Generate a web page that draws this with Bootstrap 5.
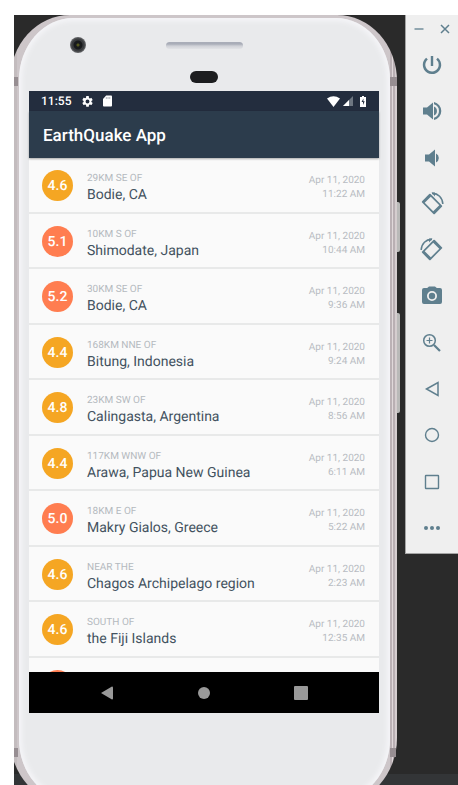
<!DOCTYPE html>
<html lang="en">
<head>
<meta charset="utf-8">
<meta name="viewport" content="width=device-width, initial-scale=1">
<title>EarthQuake App</title>
<link href="https://cdn.jsdelivr.net/npm/bootstrap@5.3.0/dist/css/bootstrap.min.css" rel="stylesheet">
<style>
  body { font-family: Roboto, "Noto Sans", sans-serif; background: #fff; text-rendering: geometricPrecision; }
  .stage { margin: 15px 0 0 14px; height: calc(100vh - 15px);
    background: linear-gradient(to top, #333537 11px, #2a2a2a 11px); }
  .handset { margin-left: -4px; margin-right: 8px; border-radius: 60px / 66px; min-width: 0;
    background: linear-gradient(to right, #c3bcbe 0 7px, #cdc6c9 7px calc(100% - 7px), #bbb1b5 calc(100% - 7px) calc(100% - 5px), #e0d8da calc(100% - 5px) calc(100% - 4px), #b9afb3 calc(100% - 4px) calc(100% - 2px), #d5cdcf calc(100% - 2px));
    padding: 3px 7px 3px 9px; }
  .face { background: #e9eaec; border-radius: 54px / 62px; padding: 73px 11px 88px 10px;
    box-shadow: inset 0 0 5px 3px #f5f5f8; }
  .seam { top: 62px; width: 7px; height: 9px; background: #978e92; }
  .seam-left { left: 4px; width: 4px; }
  .seam-right { right: 0; }
  .seam-low-left { left: 4px; width: 4px; top: 733px; }
  .seam-low-right { right: 1px; width: 6px; top: 733px; }
  .side-key { left: 100%; width: 3px; background: #b9b9b8; border-radius: 0 2px 2px 0; }
  .key-power { top: 187px; height: 50px; }
  .key-volume { top: 298px; height: 100px; }
  .lens { left: 60px; top: 22px; width: 16px; height: 16px; border-radius: 50%;
    background: radial-gradient(circle, #55581f 0 1px, #181a1c 2px 4px, #3a3c3e 5px 6px, #6c6d70 8px); }
  .speaker { left: 156px; top: 27px; width: 77px; height: 7px; border-radius: 4px;
    background: linear-gradient(#a9adb8 0 2px, #cfd1d7 4px, #e2e3e6); }
  .sensor { left: 180px; top: 56px; width: 28px; height: 12px; border-radius: 6px; background: #1c1d1f; }
  .statusbar { height: 20px; background: #232d3e; color: #fff; padding: 0 13px 0 12px; font-size: 12px; line-height: 20px; font-weight: 500; }
  .status-icons { margin-left: 10px; gap: 9px; }
  .signal-icons { gap: 3px; }
  .appbar { height: 47px; background: #2c3c4c; color: #fff; padding: 2px 14px 0; box-shadow: 0 1px 2px #0005; }
  .appbar h1 { font-size: 17px; line-height: 20px; font-weight: 500; }
  .quake-view { height: 514px; background: #fafafa; }
  .quake-list { height: 555px; display: grid; grid-auto-rows: 1fr; }
  .quake { border-bottom: 2px solid #e8e9e9; padding: 2px 14px 0 13px; }
  .magnitude { width: 31px; height: 31px; margin-right: 14px; padding-top: 2px; font-size: 14px; font-weight: 500; color: #fff; background: #f5a623; }
  .strong { background: #ff7d50; }
  .quake > div { padding-top: 5px; }
  .offset-text { font-size: 10px; line-height: 14px; color: #b4b9be; }
  .place-text { font-size: 14px; line-height: 18px; color: #435260; }
  .when-text { font-size: 10px; line-height: 14px; color: #b8bcc2; }
  .softkeys { height: 41px; background: #000; gap: 83px; }
  .softkeys button, .tools button { border: 0; background: none; padding: 0; }
  .tools { width: 53px; min-height: 539px; padding-bottom: 2px; background: #efefef; border-left: 1px solid #a4a4a4; border-bottom: 1px solid #a4a4a4; color: #5f7f8e; }
  .tools button { color: inherit; }
  .tools .window-keys button { height: 27px; width: 26px; }
  svg { display: block; }
</style>
<script src="https://cdn.jsdelivr.net/npm/bootstrap@5.3.0/dist/js/bootstrap.bundle.min.js"></script>
</head>
<body>
<div class="stage d-flex align-items-start overflow-hidden">
  <main class="handset position-relative flex-grow-1">
    <i class="seam seam-left position-absolute"></i><i class="seam seam-right position-absolute"></i>
    <i class="seam seam-low-left position-absolute"></i><i class="seam seam-low-right position-absolute"></i>
    <i class="side-key key-power position-absolute"></i><i class="side-key key-volume position-absolute"></i>
    <div class="face">
      <i class="lens position-absolute"></i><i class="speaker position-absolute"></i><i class="sensor position-absolute"></i>
      <div class="statusbar d-flex align-items-center">
        <span>11:55</span>
        <div class="status-icons d-flex align-items-center">
          <svg width="13" height="13" viewBox="0 0 24 24" fill="#fff" aria-hidden="true"><path d="M19.14 12.94c.04-.3.06-.61.06-.94s-.02-.64-.07-.94l2.03-1.58a.49.49 0 0 0 .12-.61l-1.92-3.32a.49.49 0 0 0-.59-.22l-2.39.96a7 7 0 0 0-1.62-.94l-.36-2.54A.48.48 0 0 0 13.92 2h-3.84a.48.48 0 0 0-.48.41l-.36 2.54c-.59.24-1.13.57-1.62.94l-2.39-.96a.48.48 0 0 0-.59.22L2.74 8.87a.48.48 0 0 0 .12.61l2.03 1.58a7.300 7.300 0 0 0 0 1.880l-2.03 1.580a.49.49 0 0 0-.12.61l1.920 3.320c.12.22.37.29.59.22l2.390-.96c.5.38 1.030.7 1.620.94l.36 2.540c.05.24.24.41.48.41h3.840c.24 0 .44-.17.47-.41l.36-2.540a7 7 0 0 0 1.620-.94l2.390.96c.22.08.47 0 .59-.22l1.920-3.320a.48.48 0 0 0-.12-.61zM12 15.600a3.600 3.600 0 1 1 0-7.200 3.600 3.600 0 0 1 0 7.200z"/></svg>
          <svg width="9" height="12" viewBox="0 0 10 12" preserveAspectRatio="none" aria-hidden="true"><path d="M3.500 .5H9a1 1 0 0 1 1 1v9a1 1 0 0 1-1 1H1a1 1 0 0 1-1-1V4z" fill="#fff"/><path d="M3.700 2v2M5.600 2v2M7.500 2v2" stroke="#8b929c" stroke-width=".7"/></svg>
        </div>
        <div class="signal-icons ms-auto d-flex align-items-center">
          <svg width="13" height="11" viewBox="0 0 13 11" aria-hidden="true"><path d="M0 2.500Q6.500-2 13 2.500L6.500 11z" fill="#fff"/></svg>
          <svg width="10" height="10" viewBox="0 0 10 10" aria-hidden="true"><path d="M0 10 10 0v10z" fill="#6d7681"/><path d="M0 10 6 4v6z" fill="#fff"/></svg>
          <svg class="ms-1" width="6" height="11" viewBox="0 0 6 11" aria-hidden="true"><path d="M2 0h2v1h2v10H0V1h2z" fill="#fff"/><path d="M3.500 2.500 1.500 6H3v3l1.700-3.700H3.300z" fill="#232d3e"/></svg>
        </div>
      </div>
      <header class="appbar d-flex align-items-center position-relative"><h1 class="m-0">EarthQuake App</h1></header>
      <div class="quake-view overflow-hidden">
        <ul class="quake-list list-unstyled m-0">
          <li class="quake d-flex align-items-center"><span class="magnitude rounded-circle d-flex align-items-center justify-content-center">4.6</span><div class="flex-grow-1"><div class="offset-text">29KM SE OF</div><div class="place-text">Bodie, CA</div></div><div class="when-text text-end">Apr 11, 2020<br>11:22 AM</div></li>
          <li class="quake d-flex align-items-center"><span class="magnitude strong rounded-circle d-flex align-items-center justify-content-center">5.1</span><div class="flex-grow-1"><div class="offset-text">10KM S OF</div><div class="place-text">Shimodate, Japan</div></div><div class="when-text text-end">Apr 11, 2020<br>10:44 AM</div></li>
          <li class="quake d-flex align-items-center"><span class="magnitude strong rounded-circle d-flex align-items-center justify-content-center">5.2</span><div class="flex-grow-1"><div class="offset-text">30KM SE OF</div><div class="place-text">Bodie, CA</div></div><div class="when-text text-end">Apr 11, 2020<br>9:36 AM</div></li>
          <li class="quake d-flex align-items-center"><span class="magnitude rounded-circle d-flex align-items-center justify-content-center">4.4</span><div class="flex-grow-1"><div class="offset-text">168KM NNE OF</div><div class="place-text">Bitung, Indonesia</div></div><div class="when-text text-end">Apr 11, 2020<br>9:24 AM</div></li>
          <li class="quake d-flex align-items-center"><span class="magnitude rounded-circle d-flex align-items-center justify-content-center">4.8</span><div class="flex-grow-1"><div class="offset-text">23KM SW OF</div><div class="place-text">Calingasta, Argentina</div></div><div class="when-text text-end">Apr 11, 2020<br>8:56 AM</div></li>
          <li class="quake d-flex align-items-center"><span class="magnitude rounded-circle d-flex align-items-center justify-content-center">4.4</span><div class="flex-grow-1"><div class="offset-text">117KM WNW OF</div><div class="place-text">Arawa, Papua New Guinea</div></div><div class="when-text text-end">Apr 11, 2020<br>6:11 AM</div></li>
          <li class="quake d-flex align-items-center"><span class="magnitude strong rounded-circle d-flex align-items-center justify-content-center">5.0</span><div class="flex-grow-1"><div class="offset-text">18KM E OF</div><div class="place-text">Makry Gialos, Greece</div></div><div class="when-text text-end">Apr 11, 2020<br>5:22 AM</div></li>
          <li class="quake d-flex align-items-center"><span class="magnitude rounded-circle d-flex align-items-center justify-content-center">4.6</span><div class="flex-grow-1"><div class="offset-text">NEAR THE</div><div class="place-text">Chagos Archipelago region</div></div><div class="when-text text-end">Apr 11, 2020<br>2:23 AM</div></li>
          <li class="quake d-flex align-items-center"><span class="magnitude rounded-circle d-flex align-items-center justify-content-center">4.6</span><div class="flex-grow-1"><div class="offset-text">SOUTH OF</div><div class="place-text">the Fiji Islands</div></div><div class="when-text text-end">Apr 11, 2020<br>12:35 AM</div></li>
          <li class="quake d-flex align-items-center"><span class="magnitude strong rounded-circle"></span></li>
        </ul>
      </div>
      <nav class="softkeys d-flex align-items-center justify-content-center" aria-label="System">
        <button type="button" aria-label="Back"><svg width="14" height="14" viewBox="0 0 14 14" fill="#999"><path d="M1 7 12 .5q1 0 1 1v11q0 1-1 1z"/></svg></button>
        <button type="button" aria-label="Home"><svg width="14" height="14" viewBox="0 0 14 14" fill="#999"><circle cx="7" cy="7" r="6"/></svg></button>
        <button type="button" aria-label="Overview"><svg width="14" height="14" viewBox="0 0 14 14" fill="#999"><rect width="14" height="14" rx="1"/></svg></button>
      </nav>
    </div>
  </main>
  <aside class="tools d-flex flex-column flex-shrink-0" aria-label="Emulator controls">
    <div class="window-keys d-flex">
      <button type="button" aria-label="Minimize" class="d-flex align-items-center justify-content-center"><svg width="10" height="10" viewBox="0 0 10 10" stroke="currentColor" stroke-width="1.300"><path d="M.5 5h9"/></svg></button>
      <button type="button" aria-label="Close" class="d-flex align-items-center justify-content-center"><svg width="10" height="10" viewBox="0 0 10 10" stroke="currentColor" stroke-width="1.500"><path d="M1 1l8 8M9 1 1 9"/></svg></button>
    </div>
    <button type="button" aria-label="Power" class="flex-fill d-flex align-items-center justify-content-center"><svg width="24" height="24" viewBox="0 0 24 24" fill="currentColor"><path d="M13.200 3h-2.400v10h2.400zm4.630 1.800-1.600 1.700A6.700 6.700 0 0 1 18.700 12a6.700 6.700 0 1 1-10.900-5.500L6.170 4.800A9.200 9.200 0 0 0 2.800 12a9.200 9.200 0 1 0 15.030-7.200z"/></svg></button>
    <button type="button" aria-label="Volume up" class="flex-fill d-flex align-items-center justify-content-center"><svg width="24" height="24" viewBox="0 0 24 24" fill="currentColor"><path d="M3 8.500v7h4l6 5V3.500l-6 5zM14 7.500v9a4.900 4.900 0 0 0 0-9zM14 3v2.300a7 7 0 0 1 0 13.400V21a9.200 9.200 0 0 0 0-18z"/></svg></button>
    <button type="button" aria-label="Volume down" class="flex-fill d-flex align-items-center justify-content-center"><svg width="24" height="24" viewBox="0 0 24 24" fill="currentColor"><path d="M5 8.500v7h4l6 5V3.500l-6 5zM16 7.500v9a5 5 0 0 0 0-9z"/></svg></button>
    <button type="button" aria-label="Rotate left" class="flex-fill d-flex align-items-center justify-content-center"><svg width="24" height="24" viewBox="0 0 24 24" fill="currentColor"><path transform="rotate(-45 12 12)" fill-rule="evenodd" d="M7 3h10q1 0 1 1v16q0 1-1 1H7q-1 0-1-1V4q0-1 1-1zM7.700 6v12h8.600V6z"/><path d="M12 1.400C18 1 22.600 6 22.800 12" fill="none" stroke="currentColor" stroke-width="1.500"/><path d="M11.500 .6h3.500v4z"/></svg></button>
    <button type="button" aria-label="Rotate right" class="flex-fill d-flex align-items-center justify-content-center"><svg width="24" height="24" viewBox="0 0 24 24" fill="currentColor"><path transform="rotate(45 12 12)" fill-rule="evenodd" d="M7 3h10q1 0 1 1v16q0 1-1 1H7q-1 0-1-1V4q0-1 1-1zM7.700 6v12h8.600V6z"/><path d="M12 1.400C6 1 1.400 6 1.200 12" fill="none" stroke="currentColor" stroke-width="1.500"/><path d="M12.500 .6H9v4z"/></svg></button>
    <button type="button" aria-label="Take screenshot" class="flex-fill d-flex align-items-center justify-content-center"><svg width="24" height="24" viewBox="0 0 24 24" fill="currentColor"><circle cx="12" cy="12" r="3.200"/><path d="M9 2.500 7.170 4H4a2 2 0 0 0-2 2v12a2 2 0 0 0 2 2h16a2 2 0 0 0 2-2V6a2 2 0 0 0-2-2h-3.170L15 2.500zm3 14.500a5 5 0 1 1 0-10 5 5 0 0 1 0 10z"/></svg></button>
    <button type="button" aria-label="Zoom" class="flex-fill d-flex align-items-center justify-content-center"><svg width="24" height="24" viewBox="0 0 24 24" fill="none" stroke="currentColor"><circle cx="9.500" cy="9.500" r="5.800" stroke-width="1.500"/><path d="M9.500 6.500v6M6.500 9.500h6" stroke-width="1.200"/><path d="M14 14l6 6" stroke-width="2.200"/></svg></button>
    <button type="button" aria-label="Back" class="flex-fill d-flex align-items-center justify-content-center"><svg width="24" height="24" viewBox="0 0 24 24" fill="none" stroke="currentColor" stroke-width="1.500"><path d="M6.500 12 18 5.500v13z"/></svg></button>
    <button type="button" aria-label="Home" class="flex-fill d-flex align-items-center justify-content-center"><svg width="24" height="24" viewBox="0 0 24 24" fill="none" stroke="currentColor" stroke-width="1.400"><circle cx="12" cy="12" r="6.500"/></svg></button>
    <button type="button" aria-label="Overview" class="flex-fill d-flex align-items-center justify-content-center"><svg width="24" height="24" viewBox="0 0 24 24" fill="none" stroke="currentColor" stroke-width="1.400"><rect x="5.500" y="5.500" width="13" height="13" rx=".5"/></svg></button>
    <button type="button" aria-label="More" class="flex-fill d-flex align-items-center justify-content-center"><svg width="24" height="24" viewBox="0 0 24 24" fill="currentColor"><circle cx="6" cy="12" r="2"/><circle cx="12" cy="12" r="2"/><circle cx="18" cy="12" r="2"/></svg></button>
  </aside>
</div>
</body>
</html>
